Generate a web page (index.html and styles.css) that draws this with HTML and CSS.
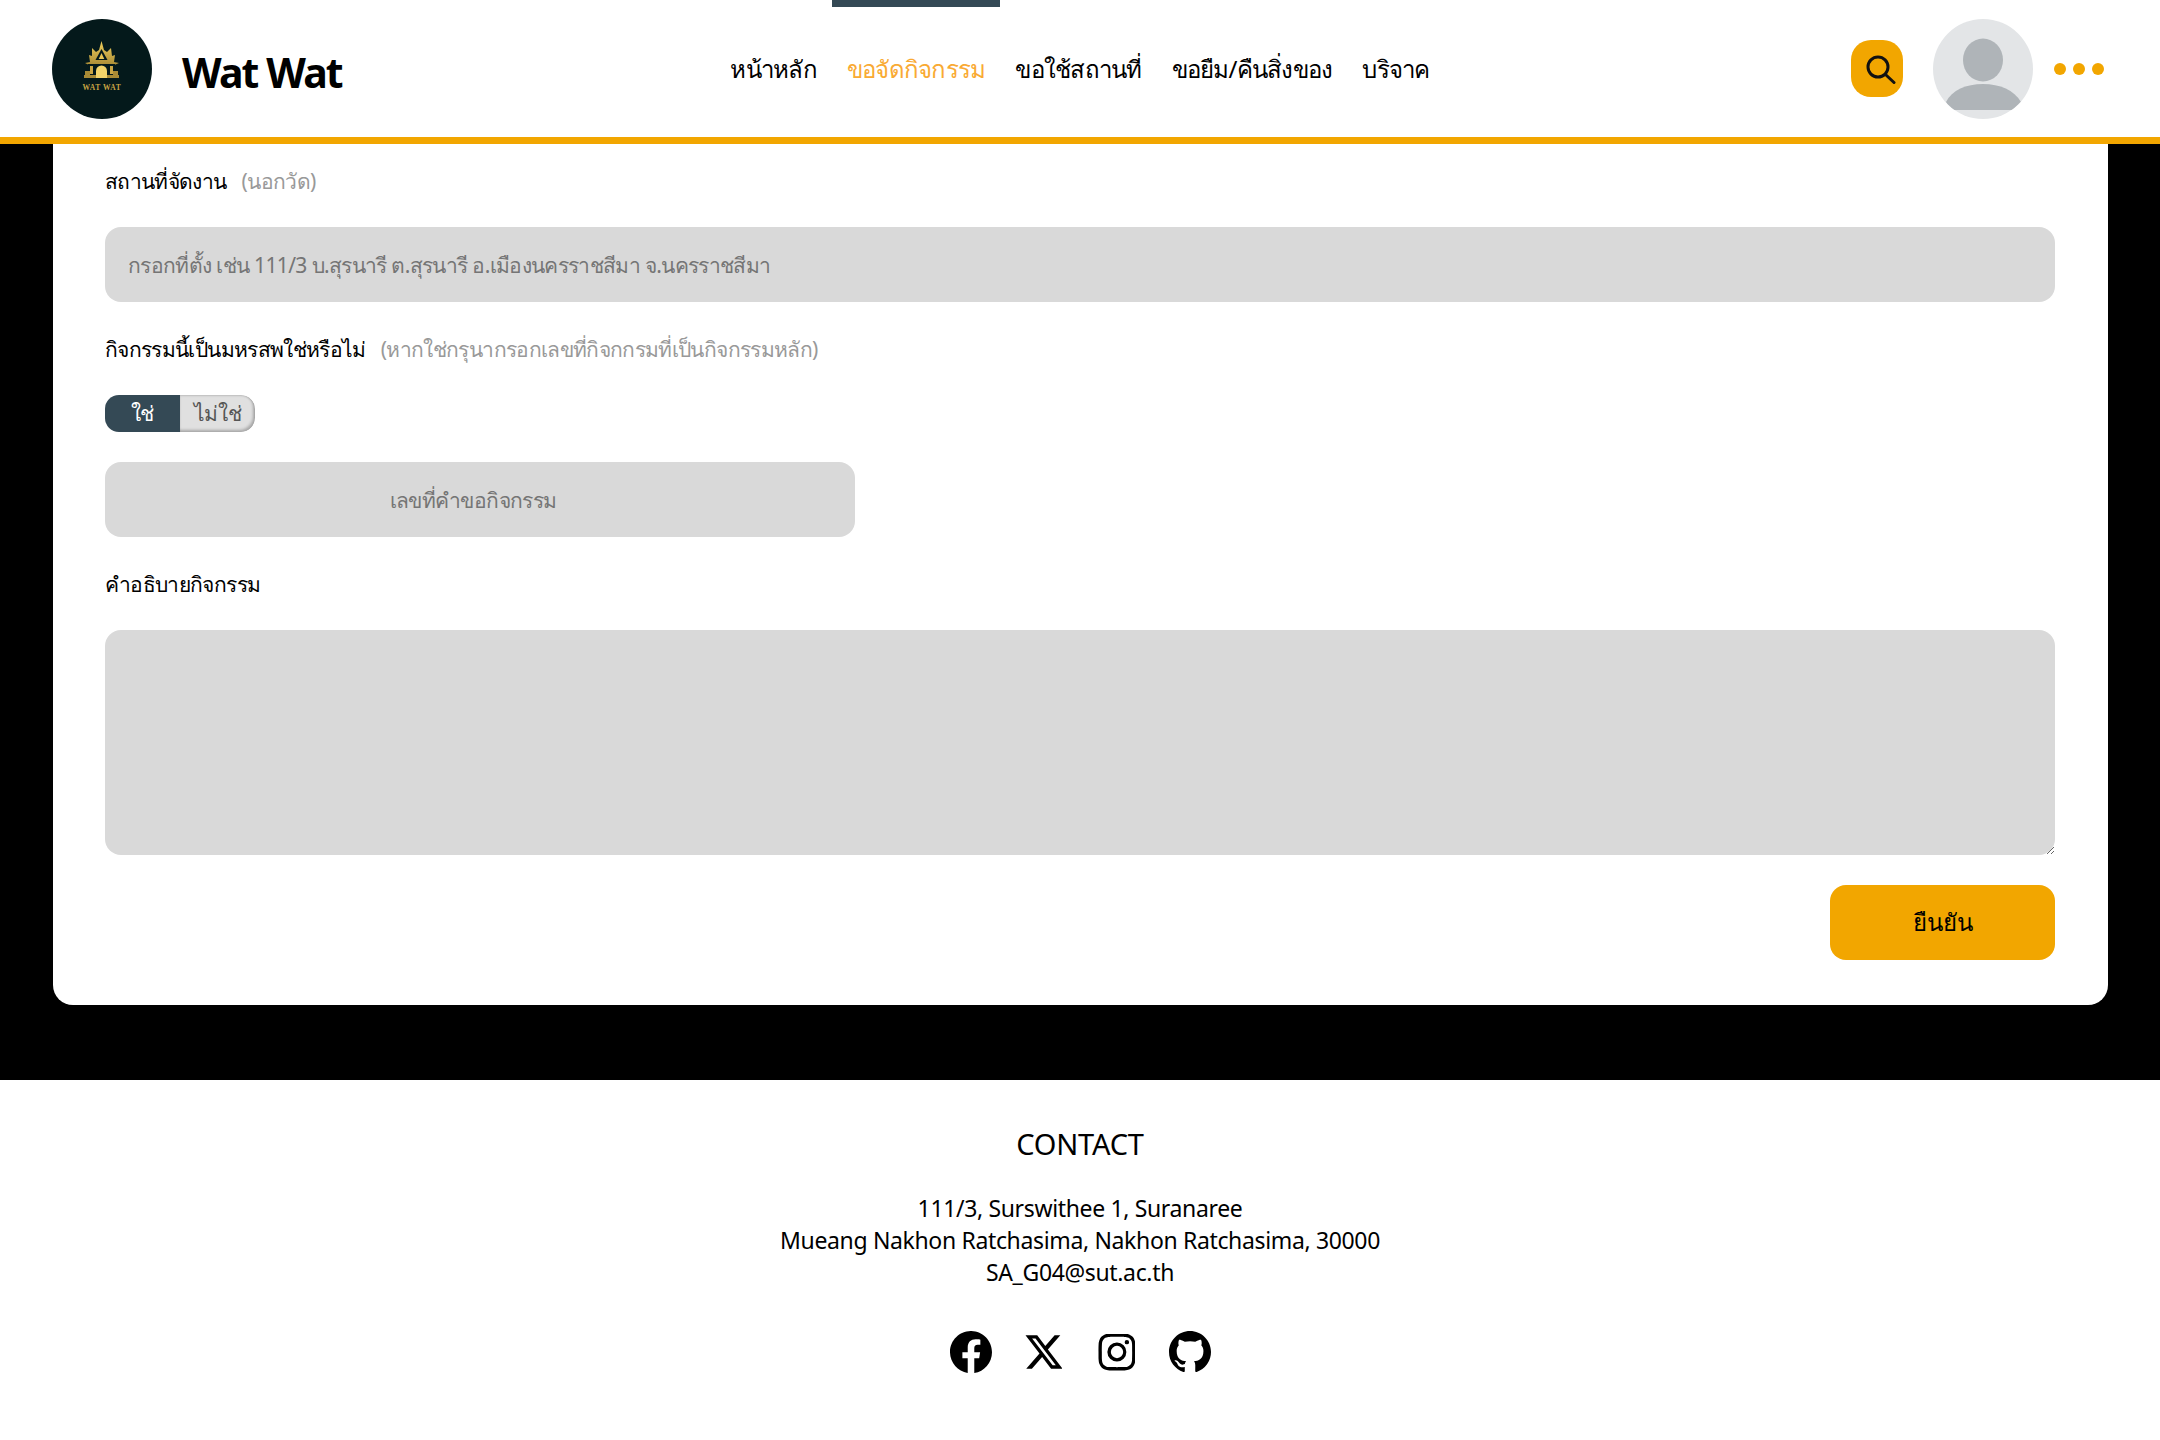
FILE: index.html
```html
<!DOCTYPE html>
<html lang="en">
<head>
  <meta charset="UTF-8">
  <meta name="viewport" content="width=device-width, initial-scale=1.0">
  <title>Wat Wat</title>
  <link rel="stylesheet" href="styles.css">
</head>
<body>
  <header class="navbar">
    <div class="brand">
      <svg class="logo" viewBox="0 0 100 100">
        <defs>
          <linearGradient id="gold" x1="0" y1="0" x2="0" y2="1">
            <stop offset="0" stop-color="#f0cf5c"/>
            <stop offset="1" stop-color="#a88a35"/>
          </linearGradient>
        </defs>
        <circle cx="50" cy="50" r="50" fill="#04191b"/>
        <path d="M49.500 22l2.500 9 3 2 4-4 1 8 3-1-1 7 5 1-7 3H39l-6-3 5-1-1-7 3 1 0-8 4 4 3-2z" fill="url(#gold)"/>
        <path d="M49.500 30l6 11H43.500z" fill="#04191b"/>
        <path d="M49.500 34l2.800 6h-5.600z" fill="#e8c655"/>
        <path d="M36 45h27v2H36z" fill="#04191b"/>
        <path d="M38 47h3v8h-3zM58 47h3v8h-3z" fill="#c9a544"/>
        <path d="M33 52h5v4h23v-4h5v4h1v3H32v-3h1z" fill="#a88a35"/>
        <path d="M44 59v-7a5.500 5.500 0 0 1 11 0v7z" fill="#f2d46a"/>
        <text class="logo-text" x="50" y="70.500" text-anchor="middle">WAT WAT</text>
      </svg>
      <span class="brand-name">Wat Wat</span>
    </div>
    <nav class="menu">
      <a>หน้าหลัก</a>
      <a class="active">ขอจัดกิจกรรม</a>
      <a>ขอใช้สถานที่</a>
      <a>ขอยืม/คืนสิ่งของ</a>
      <a>บริจาค</a>
    </nav>
    <div class="actions">
      <button class="search-btn">
        <svg viewBox="0 0 30 30" width="30" height="30" fill="none" stroke="#111" stroke-width="3">
          <circle cx="12" cy="12" r="10"/>
          <path d="M19.500 19.500l8.500 8" stroke-linecap="round"/>
        </svg>
      </button>
      <svg class="avatar" viewBox="0 0 100 100">
        <defs>
          <clipPath id="avatar-clip"><circle cx="50" cy="50" r="50"/></clipPath>
        </defs>
        <g clip-path="url(#avatar-clip)">
          <rect width="100" height="100" fill="#e3e5e7"/>
          <ellipse cx="50" cy="41" rx="20" ry="21.500" fill="#afb4b8"/>
          <path d="M13 83c6-12 20-18 37-18s31 6 38 18l-5 8H18z" fill="#afb4b8"/>
        </g>
      </svg>
      <div class="dots"><span></span><span></span><span></span></div>
    </div>
  </header>

  <main class="page">
    <form class="card">
      <div class="label-row label-first">
        <label>สถานที่จัดงาน</label>
        <span class="hint">(นอกวัด)</span>
      </div>
      <input class="field" type="text" placeholder="กรอกที่ตั้ง เช่น 111/3 บ.สุรนารี ต.สุรนารี อ.เมืองนครราชสีมา จ.นครราชสีมา">

      <div class="label-row">
        <label>กิจกรรมนี้เป็นมหรสพใช่หรือไม่</label>
        <span class="hint">(หากใช่กรุนากรอกเลขที่กิจกกรมที่เป็นกิจกรรมหลัก)</span>
      </div>
      <div class="toggle">
        <span class="toggle-on">ใช่</span>
        <span class="toggle-off">ไม่ใช่</span>
      </div>
      <input class="field field-short" type="text" placeholder="เลขที่คำขอกิจกรรม">

      <div class="label-row">
        <label>คำอธิบายกิจกรรม</label>
      </div>
      <textarea class="field field-area"></textarea>

      <div class="form-actions">
        <button class="submit-btn" type="button">ยืนยัน</button>
      </div>
    </form>
  </main>

  <footer class="footer">
    <h2>CONTACT</h2>
    <p>111/3, Surswithee 1, Suranaree</p>
    <p>Mueang Nakhon Ratchasima, Nakhon Ratchasima, 30000</p>
    <p>SA_G04@sut.ac.th</p>
    <div class="socials">
      <svg viewBox="0 0 16 16"><path d="M16 8.049c0-4.446-3.582-8.05-8-8.05C3.58 0-.002 3.603-.002 8.05c0 4.017 2.926 7.347 6.75 7.951v-5.625h-2.03V8.05H6.75V6.275c0-2.017 1.195-3.131 3.022-3.131.876 0 1.791.157 1.791.157v1.98h-1.009c-.993 0-1.303.621-1.303 1.258v1.51h2.218l-.354 2.326H9.25V16c3.824-.604 6.75-3.934 6.75-7.951"/></svg>
      <svg class="small" viewBox="0 0 16 16"><path d="M12.600.75h2.454l-5.360 6.142L16 15.250h-4.937l-3.867-5.070-4.425 5.070H.316l5.733-6.570L0 .75h5.063l3.495 4.633L12.601.75Zm-.860 13.028h1.360L4.323 2.145H2.865z"/></svg>
      <svg class="small" viewBox="0 0 16 16"><path d="M8 0C5.829 0 5.556.01 4.703.048 3.850.088 3.269.222 2.760.42a3.900 3.900 0 0 0-1.417.923A3.900 3.900 0 0 0 .42 2.760C.222 3.268.087 3.850.048 4.700.01 5.555 0 5.827 0 8.001c0 2.172.01 2.444.048 3.297.04.852.174 1.433.372 1.942.205.526.478.972.923 1.417.444.445.89.719 1.416.923.51.198 1.090.333 1.942.372C5.555 15.990 5.827 16 8 16s2.444-.01 3.298-.048c.851-.04 1.434-.174 1.943-.372a3.900 3.900 0 0 0 1.416-.923c.445-.445.718-.891.923-1.417.197-.509.332-1.090.372-1.942C15.990 10.445 16 10.173 16 8s-.01-2.445-.048-3.299c-.04-.851-.175-1.433-.372-1.941a3.900 3.900 0 0 0-.923-1.417A3.900 3.900 0 0 0 13.240.42c-.51-.198-1.092-.333-1.943-.372C10.443.01 10.172 0 7.998 0zm-.717 1.442h.718c2.136 0 2.389.007 3.232.046.78.035 1.204.166 1.486.275.373.145.64.319.92.599s.453.546.598.92c.11.281.24.705.275 1.485.039.843.047 1.096.047 3.231s-.008 2.389-.047 3.232c-.035.78-.166 1.203-.275 1.485a2.500 2.500 0 0 1-.599.919c-.28.28-.546.453-.92.598-.28.11-.704.24-1.485.276-.843.038-1.096.047-3.232.047s-2.390-.009-3.233-.047c-.78-.036-1.203-.166-1.485-.276a2.500 2.500 0 0 1-.92-.598 2.500 2.500 0 0 1-.6-.92c-.109-.281-.24-.705-.275-1.485-.038-.843-.046-1.096-.046-3.233s.008-2.388.046-3.231c.036-.78.166-1.204.276-1.486.145-.373.319-.64.599-.92s.546-.453.92-.598c.282-.11.705-.24 1.485-.276.738-.034 1.024-.044 2.515-.045zm4.988 1.328a.96.96 0 1 0 0 1.920.96.96 0 0 0 0-1.920m-4.270 1.122a4.109 4.109 0 1 0 0 8.217 4.109 4.109 0 0 0 0-8.217m0 1.441a2.667 2.667 0 1 1 0 5.334 2.667 2.667 0 0 1 0-5.334"/></svg>
      <svg viewBox="0 0 16 16"><path d="M8 0C3.580 0 0 3.580 0 8c0 3.540 2.290 6.530 5.470 7.590.4.07.55-.17.55-.38 0-.19-.01-.82-.01-1.490-2.010.37-2.530-.49-2.690-.94-.09-.23-.48-.94-.82-1.130-.28-.15-.68-.52-.01-.53.63-.01 1.080.58 1.230.82.72 1.210 1.870.87 2.330.66.07-.52.28-.87.51-1.070-1.780-.2-3.640-.89-3.640-3.950 0-.87.31-1.590.82-2.150-.08-.2-.36-1.020.08-2.120 0 0 .67-.21 2.200.82.64-.18 1.320-.27 2-.27s1.360.09 2 .27c1.530-1.040 2.200-.82 2.200-.82.44 1.100.16 1.920.08 2.120.51.56.82 1.270.82 2.150 0 3.070-1.870 3.750-3.650 3.950.29.25.54.73.54 1.480 0 1.070-.01 1.930-.01 2.200 0 .21.15.46.55.38A8.010 8.010 0 0 0 16 8c0-4.420-3.580-8-8-8"/></svg>
    </div>
  </footer>
</body>
</html>
```

FILE: styles.css
```css
body {
  margin: 0;
  font-family: "Noto Sans", "Liberation Sans", sans-serif;
  color: #000;
  background: #fff;
}

/* Header */
.navbar {
  display: grid;
  grid-template-columns: 1fr auto 1fr;
  align-items: center;
  height: 137px;
  padding: 0 52px;
  background: #fff;
  border-bottom: 7px solid #f2a600;
}

.brand {
  display: flex;
  align-items: center;
  gap: 30px;
}

.logo {
  width: 100px;
  height: 100px;
}

.logo-text {
  font-family: "Liberation Serif", serif;
  font-size: 7.500px;
  font-weight: 700;
  letter-spacing: 0.6px;
  fill: #c9a544;
}

.brand-name {
  padding-top: 6px;
  font-size: 41px;
  font-weight: 700;
  letter-spacing: -1.9px;
}

.menu {
  display: flex;
  align-items: stretch;
  height: 137px;
}

.menu a {
  display: flex;
  align-items: center;
  padding: 0 15px 5px;
  font-size: 24px;
  letter-spacing: -0.75px;
  border-top: 7px solid transparent;
  box-sizing: border-box;
}

.menu a.active {
  color: #f9aa33;
  border-top-color: #344955;
}

.actions {
  display: flex;
  align-items: center;
  justify-content: flex-end;
  padding-right: 4px;
}

.search-btn {
  display: flex;
  align-items: center;
  justify-content: center;
  width: 52px;
  height: 57px;
  padding: 3px 0 0 8px;
  border: none;
  border-radius: 20px;
  background: #f2a600;
  margin-right: 30px;
}

.avatar {
  width: 100px;
  height: 100px;
  margin-right: 21px;
}

.dots {
  display: flex;
  gap: 7px;
}

.dots span {
  width: 12px;
  height: 12px;
  border-radius: 50%;
  background: #f2a600;
}

/* Form */
.page {
  padding: 0 52px 75px 53px;
  background: #000;
}

.card {
  padding: 0 53px 45px 52px;
  background: #fff;
  border-radius: 0 0 20px 20px;
}

.label-row {
  display: flex;
  align-items: center;
  gap: 15px;
  height: 30px;
  font-size: 21px;
  letter-spacing: -0.65px;
}

.label-first {
  padding-top: 22px;
}

.hint {
  color: #999;
}

.field {
  display: block;
  box-sizing: border-box;
  width: 100%;
  height: 75px;
  padding: 0 23px;
  font-family: inherit;
  font-size: 21px;
  letter-spacing: -0.65px;
  color: #333;
  background: #d9d9d9;
  border: none;
  border-radius: 16px;
  outline: none;
  margin: 31px 0 32px;
}

.field::placeholder {
  color: #757575;
}

.field-short {
  width: 750px;
  padding-right: 37px;
  margin-top: 30px;
  text-align: center;
}

.field-area {
  height: 225px;
  padding: 16px 23px;
  margin-bottom: 30px;
}

.toggle {
  display: flex;
  width: 150px;
  height: 37px;
  margin-top: 31px;
  font-size: 21px;
  letter-spacing: -0.4px;
  border-radius: 14px;
  overflow: hidden;
}

.toggle span {
  display: flex;
  align-items: center;
  justify-content: center;
}

.toggle-on {
  width: 75px;
  color: #fff;
  background: #344955;
}

.toggle-off {
  width: 75px;
  color: #555;
  background: #e0e0e0;
  border-radius: 0 14px 14px 0;
  box-shadow: inset -2px -2px 3px rgba(0, 0, 0, 0.25), inset 0 1px 2px rgba(0, 0, 0, 0.15);
}

.form-actions {
  display: flex;
  justify-content: flex-end;
}

.submit-btn {
  width: 225px;
  height: 75px;
  font-family: inherit;
  font-size: 24px;
  color: #000;
  background: #f2a600;
  border: none;
  border-radius: 16px;
}

/* Footer */
.footer {
  height: 360px;
  padding-top: 44px;
  box-sizing: border-box;
  text-align: center;
  background: #fff;
}

.footer h2 {
  margin: 0 0 28px;
  font-size: 29px;
  font-weight: 400;
  line-height: 40px;
  letter-spacing: -0.2px;
}

.footer p {
  margin: 0;
  font-size: 23px;
  line-height: 32px;
  letter-spacing: -0.35px;
}

.socials {
  display: flex;
  justify-content: center;
  gap: 31px;
  margin-top: 43px;
}

.socials svg {
  width: 42px;
  height: 42px;
}

.socials .small {
  box-sizing: border-box;
  padding: 2.500px;
}
```
